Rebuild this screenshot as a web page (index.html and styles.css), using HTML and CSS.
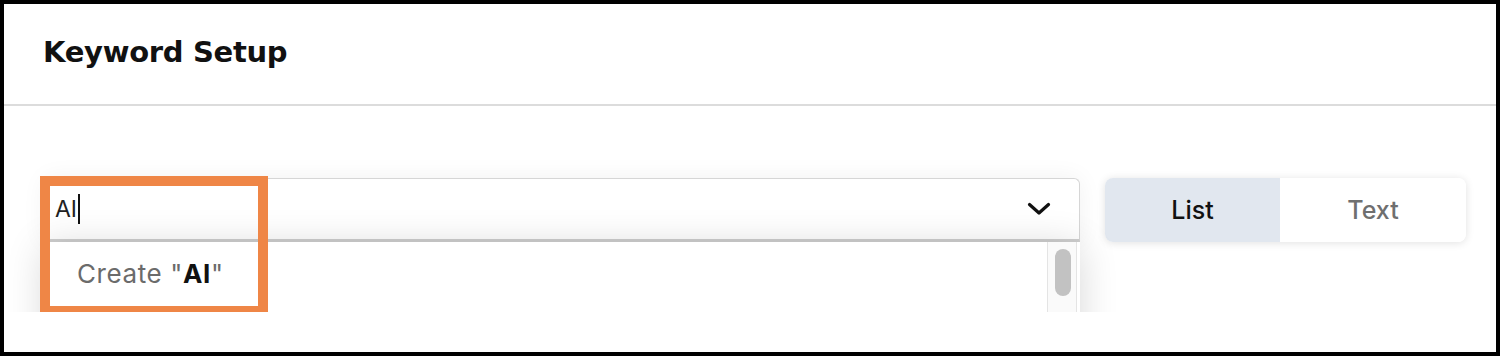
FILE: index.html
```html
<!DOCTYPE html>
<html>
<head>
<meta charset="utf-8">
<link rel="stylesheet" href="styles.css">
</head>
<body>
<div class="frame">
  <header class="header">
    <h1 class="title">Keyword Setup</h1>
  </header>
  <section class="body">
    <div class="row">
      <div class="combo">
        <div class="select">
          <span class="value">AI<span class="caret"></span></span>
          <svg class="chev" width="24" height="14" viewBox="0 0 24 14"><path d="M2.5 2.5 L12 11 L21.5 2.5" fill="none" stroke="#111" stroke-width="3.2" stroke-linecap="round" stroke-linejoin="round"/></svg>
        </div>
        <div class="menu">
          <div class="options">
            <div class="option">Create "<b>AI</b>"</div>
          </div>
          <div class="track"><div class="thumb"></div></div>
        </div>
        <div class="highlight"></div>
      </div>
      <div class="toggle">
        <div class="seg active">List</div>
        <div class="seg">Text</div>
      </div>
    </div>
  </section>
</div>
</body>
</html>
```

FILE: styles.css
```css
* { box-sizing: border-box; }
html, body { margin: 0; padding: 0; background: #fff; }
body { font-family: Inter, "Noto Sans", sans-serif; }
.frame {
  width: 1500px;
  height: 356px;
  border: 4px solid #000;
  background: #fff;
  display: flex;
  flex-direction: column;
}
.header {
  height: 102px;
  border-bottom: 2px solid #dcdcdc;
  display: flex;
  align-items: center;
  padding-left: 39px;
}
.title {
  margin: 0;
  font-family: "DejaVu Sans", sans-serif;
  font-weight: 700;
  font-size: 29px;
  color: #111;
  letter-spacing: -0.3px;
  position: relative;
  top: -2px;
}
.body {
  height: 206px;
  overflow: hidden;
  padding: 72px 30px 0 40px;
}
.row {
  display: flex;
  gap: 25px;
}
.combo {
  position: relative;
  width: 1036px;
}
.select {
  height: 64px;
  border: 1px solid #d6d6d6;
  border-bottom: 3px solid #cfcfcf;
  border-radius: 6px 6px 0 0;
  display: flex;
  align-items: center;
  justify-content: space-between;
  padding: 0 28px 0 10px;
  background: #fff;
  box-shadow: 0 0 24px rgba(0,0,0,0.06);
}
.value {
  font-size: 23px;
  color: #222;
  display: flex;
  align-items: center;
}
.caret {
  display: inline-block;
  width: 2px;
  height: 30px;
  background: #111;
  margin-left: 1px;
}
.menu {
  position: absolute;
  left: 0;
  top: 64px;
  width: 1036px;
  height: 160px;
  background: #fff;
  box-shadow: 0 4px 36px rgba(0,0,0,0.16);
  display: flex;
  border-left: 1px solid #e2e2e2;
}
.options { flex: 1; }
.option {
  padding: 16px 0 0 32px;
  font-size: 26px;
  letter-spacing: 0.6px;
  color: #6b6b6b;
}
.option b { color: #111; font-weight: 700; }
.track {
  width: 30px;
  margin-right: 3px;
  background: #fafafa;
  border-left: 1px solid #e4e4e4;
  border-right: 1px solid #e4e4e4;
  padding: 7px 0 0 7px;
}
.thumb {
  width: 16px;
  height: 47px;
  border-radius: 8px;
  background: #c2c2c2;
}
.highlight {
  position: absolute;
  left: -4px;
  top: -2px;
  width: 228px;
  height: 140px;
  border: 10px solid #ef8646;
}
.toggle {
  width: 361px;
  height: 64px;
  display: flex;
  border-radius: 8px;
  overflow: hidden;
  box-shadow: 0 1px 8px rgba(0,0,0,0.12);
}
.seg {
  flex: 1;
  display: flex;
  align-items: center;
  justify-content: center;
  font-size: 25px;
  font-weight: 500;
  color: #6f6f6f;
  background: #fff;
}
.seg.active {
  flex: 0 0 175px;
  background: #e1e7ef;
  color: #111;
}
```
